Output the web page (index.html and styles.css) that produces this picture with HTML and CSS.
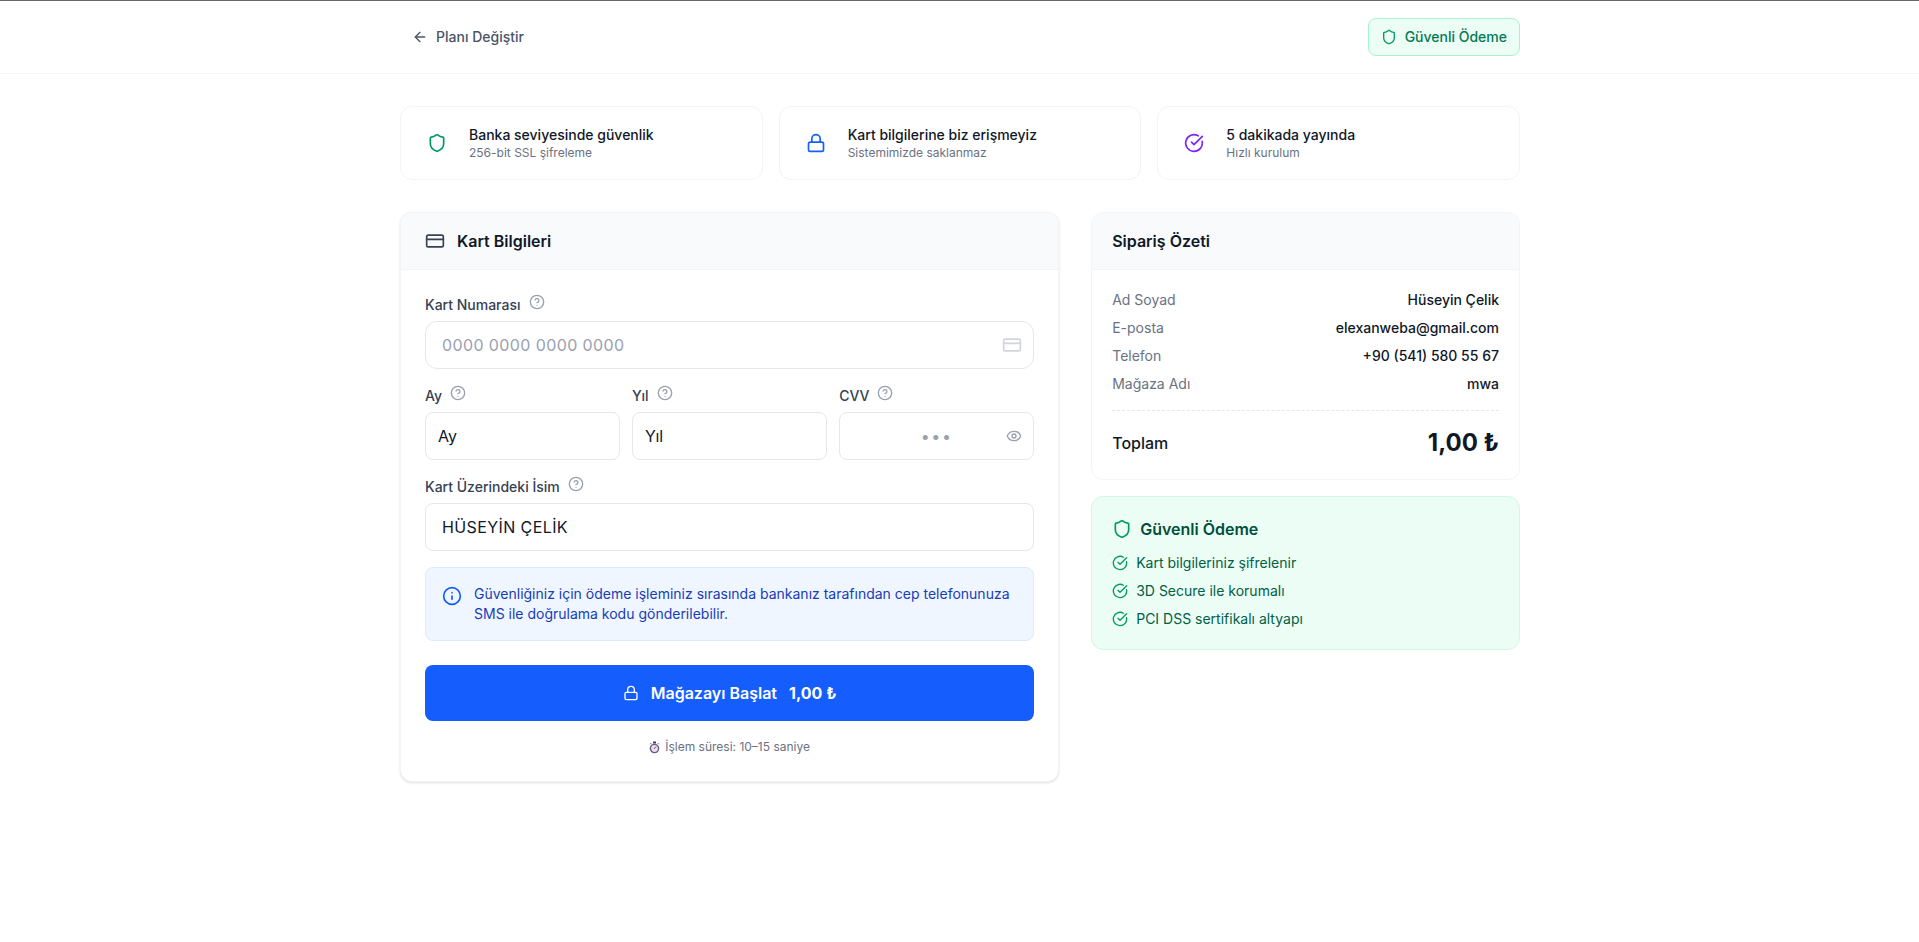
FILE: index.html
```html
<!DOCTYPE html>
<html lang="tr">
  <head>
    <meta charset="utf-8">
    <title>Güvenli Ödeme</title>
    <meta name="viewport" content="width=device-width, initial-scale=1.0">
    <link rel="stylesheet" href="styles.css">
  </head>
  <body>
    <!-- shared icons -->
    <svg class="sprite" aria-hidden="true">
      <symbol id="arrow-left" viewBox="0 0 24 24"><path d="m12 19-7-7 7-7"/><path d="M19 12H5"/></symbol>
      <symbol id="shield" viewBox="0 0 24 24"><path d="M20 13c0 5-3.5 7.5-7.66 8.95a1 1 0 0 1-.67-.01C7.5 20.5 4 18 4 13V6a1 1 0 0 1 1-1c2 0 4.5-1.2 6.24-2.72a1.17 1.17 0 0 1 1.52 0C14.51 3.81 17 5 19 5a1 1 0 0 1 1 1z"/></symbol>
      <symbol id="lock" viewBox="0 0 24 24"><rect width="18" height="11" x="3" y="11" rx="2"/><path d="M7 11V7a5 5 0 0 1 10 0v4"/></symbol>
      <symbol id="check" viewBox="0 0 24 24"><path d="M21.801 10A10 10 0 1 1 17 3.335"/><path d="m9 11 3 3L22 4"/></symbol>
      <symbol id="card" viewBox="0 0 24 24"><rect width="20" height="14" x="2" y="5" rx="2"/><path d="M2 10h20"/></symbol>
      <symbol id="help" viewBox="0 0 24 24"><circle cx="12" cy="12" r="10"/><path d="M9.09 9a3 3 0 0 1 5.83 1c0 2-3 3-3 3"/><path d="M12 17h.01"/></symbol>
      <symbol id="eye" viewBox="0 0 24 24"><path d="M2.062 12.348a1 1 0 0 1 0-.696 10.75 10.75 0 0 1 19.876 0 1 1 0 0 1 0 .696 10.75 10.75 0 0 1-19.876 0"/><circle cx="12" cy="12" r="3"/></symbol>
      <symbol id="info" viewBox="0 0 24 24"><circle cx="12" cy="12" r="10"/><path d="M12 16v-4"/><path d="M12 8h.01"/></symbol>
    </svg>

    <header class="header">
      <div class="container header-inner">
        <button class="back" type="button">
          <svg class="icon icon-sm"><use href="#arrow-left"/></svg>
          Planı Değiştir
        </button>
        <div class="secure-badge">
          <svg class="icon icon-sm"><use href="#shield"/></svg>
          <span>Güvenli Ödeme</span>
        </div>
      </div>
    </header>

    <main class="container main">
      <section class="features">
        <div class="feature">
          <div class="feature-icon green"><svg class="icon"><use href="#shield"/></svg></div>
          <div>
            <p class="feature-title">Banka seviyesinde güvenlik</p>
            <p class="feature-text">256-bit SSL şifreleme</p>
          </div>
        </div>
        <div class="feature">
          <div class="feature-icon blue"><svg class="icon"><use href="#lock"/></svg></div>
          <div>
            <p class="feature-title">Kart bilgilerine biz erişmeyiz</p>
            <p class="feature-text">Sistemimizde saklanmaz</p>
          </div>
        </div>
        <div class="feature">
          <div class="feature-icon violet"><svg class="icon"><use href="#check"/></svg></div>
          <div>
            <p class="feature-title">5 dakikada yayında</p>
            <p class="feature-text">Hızlı kurulum</p>
          </div>
        </div>
      </section>

      <div class="checkout">
        <section class="card payment">
          <div class="card-header">
            <svg class="icon"><use href="#card"/></svg>
            <h2>Kart Bilgileri</h2>
          </div>
          <form class="form">
            <div>
              <div class="label">
                <label for="number">Kart Numarası</label>
                <svg class="icon icon-sm"><use href="#help"/></svg>
              </div>
              <div class="field">
                <input class="input input-number" id="number" type="text" placeholder="0000 0000 0000 0000">
                <svg class="icon field-icon pale"><use href="#card"/></svg>
              </div>
            </div>

            <div class="row">
              <div>
                <div class="label">
                  <label for="month">Ay</label>
                  <svg class="icon icon-sm"><use href="#help"/></svg>
                </div>
                <select class="input select" id="month"><option>Ay</option></select>
              </div>
              <div>
                <div class="label">
                  <label for="year">Yıl</label>
                  <svg class="icon icon-sm"><use href="#help"/></svg>
                </div>
                <select class="input select" id="year"><option>Yıl</option></select>
              </div>
              <div>
                <div class="label">
                  <label for="cvv">CVV</label>
                  <svg class="icon icon-sm"><use href="#help"/></svg>
                </div>
                <div class="field">
                  <input class="input input-cvv" id="cvv" type="text" placeholder="•••">
                  <svg class="icon icon-sm field-icon"><use href="#eye"/></svg>
                </div>
              </div>
            </div>

            <div>
              <div class="label">
                <label for="name">Kart Üzerindeki İsim</label>
                <svg class="icon icon-sm"><use href="#help"/></svg>
              </div>
              <input class="input" id="name" type="text" value="HÜSEYİN ÇELİK">
            </div>

            <div class="notice">
              <svg class="icon"><use href="#info"/></svg>
              <p>Güvenliğiniz için ödeme işleminiz sırasında bankanız tarafından cep telefonunuza SMS ile doğrulama kodu gönderilebilir.</p>
            </div>

            <button class="submit" type="button">
              <svg class="icon icon-sm"><use href="#lock"/></svg>
              <span>Mağazayı Başlat</span>
              <span class="submit-price">1,00 ₺</span>
            </button>

            <p class="duration">
              <svg class="stopwatch" viewBox="0 0 11 13">
                <path d="M4 .5h3v2H4z" fill="#433b6b"/>
                <path d="m1.200 3.200 1-1M9.800 3.200l-1-1" stroke="#433b6b"/>
                <circle cx="5.500" cy="7.500" r="4.100" fill="#e6e0e8" stroke="#635994" stroke-width="1.400"/>
                <path d="m5 8 2.200-2.600" stroke="#d6336c"/>
              </svg>
              İşlem süresi: 10–15 saniye
            </p>
          </form>
        </section>

        <aside class="sidebar">
          <section class="card">
            <div class="card-header summary-header">
              <h2>Sipariş Özeti</h2>
            </div>
            <div class="summary">
              <dl>
                <div><dt>Ad Soyad</dt><dd>Hüseyin Çelik</dd></div>
                <div><dt>E-posta</dt><dd>elexanweba@gmail.com</dd></div>
                <div><dt>Telefon</dt><dd>+90 (541) 580 55 67</dd></div>
                <div><dt>Mağaza Adı</dt><dd>mwa</dd></div>
              </dl>
              <div class="total">
                <span>Toplam</span>
                <strong>1,00 ₺</strong>
              </div>
            </div>
          </section>

          <section class="secure">
            <h3><svg class="icon"><use href="#shield"/></svg>Güvenli Ödeme</h3>
            <ul>
              <li><svg class="icon icon-sm"><use href="#check"/></svg>Kart bilgileriniz şifrelenir</li>
              <li><svg class="icon icon-sm"><use href="#check"/></svg>3D Secure ile korumalı</li>
              <li><svg class="icon icon-sm"><use href="#check"/></svg>PCI DSS sertifikalı altyapı</li>
            </ul>
          </section>
        </aside>
      </div>
    </main>
  </body>
</html>
```
FILE: styles.css
```css
* {
  box-sizing: border-box;
  margin: 0;
  padding: 0;
}

body {
  border-top: 1px solid #666;
  background: #fff;
  color: #101828;
  font-family: Inter, "Liberation Sans", sans-serif;
  font-size: 14px;
  line-height: 20px;
}

button,
input,
select {
  font: inherit;
  color: inherit;
}

h2,
h3 {
  font-size: 16px;
  line-height: 24px;
  font-weight: 600;
}

ul {
  list-style: none;
}

.sprite {
  display: none;
}

.icon {
  flex: none;
  width: 20px;
  height: 20px;
  fill: none;
  stroke: currentColor;
  stroke-width: 2;
  stroke-linecap: round;
  stroke-linejoin: round;
}

.icon-sm {
  width: 16px;
  height: 16px;
}

.container {
  max-width: 1152px;
  margin: 0 auto;
  padding: 0 15.5px 0 16.5px;
}

/* header */
.header {
  background: #fff;
  border-bottom: 1px solid #f3f4f6;
}

.header-inner {
  display: flex;
  align-items: center;
  justify-content: space-between;
  height: 72px;
}

.back {
  display: flex;
  align-items: center;
  gap: 8px;
  padding: 8px 12px;
  border: 0;
  background: none;
  color: #4a5565;
  font-weight: 500;
  cursor: pointer;
}

.secure-badge {
  display: flex;
  align-items: center;
  gap: 8px;
  padding: 8px 12px;
  border: 1px solid #a4f4cf;
  border-radius: 8px;
  background: #ecfdf5;
  color: #007a55;
  font-weight: 500;
}

.secure-badge .icon {
  color: #009966;
}

.main {
  padding-top: 32px;
  padding-bottom: 32px;
}

/* feature cards */
.features {
  display: grid;
  grid-template-columns: repeat(3, 1fr);
  gap: 16px;
  margin-bottom: 32px;
}

.feature {
  display: flex;
  align-items: center;
  gap: 12px;
  padding: 16px;
  border: 1px solid #f3f4f6;
  border-radius: 12px;
  background: #fff;
}

.feature-icon {
  display: flex;
  align-items: center;
  justify-content: center;
  width: 40px;
  height: 40px;
}

.green {
  color: #009966;
}
.blue {
  color: #155dfc;
}
.violet {
  color: #7f22fe;
}

.feature-title {
  font-weight: 500;
}

.feature-text {
  color: #6a7282;
  font-size: 12px;
  line-height: 16px;
}

/* checkout */
.checkout {
  display: grid;
  grid-template-columns: repeat(5, 1fr);
  align-items: start;
  gap: 32px;
}

.card {
  overflow: hidden;
  border: 1px solid #f3f4f6;
  border-radius: 12px;
  background: #fff;
}

.payment {
  grid-column: span 3;
  box-shadow: 0 1px 3px rgba(0, 0, 0, 0.1), 0 1px 2px -1px rgba(0, 0, 0, 0.1);
}

.sidebar {
  grid-column: span 2;
  display: grid;
  gap: 16px;
}

.card-header {
  display: flex;
  align-items: center;
  gap: 12px;
  padding: 16px 24px;
  border-bottom: 1px solid #f3f4f6;
  background: #f9fafb;
}

.card-header .icon {
  color: #364153;
}

.summary-header {
  padding: 16px 20px;
}

.form {
  display: grid;
  gap: 16px;
  padding: 24px;
}

.label {
  display: flex;
  align-items: flex-start;
  gap: 8px;
  height: 27px;
  color: #364153;
  font-weight: 500;
}

.label label {
  padding-top: 1px;
}

.label .icon {
  color: #99a1af;
}

.row {
  display: grid;
  grid-template-columns: repeat(3, 1fr);
  gap: 12px;
}

.field {
  position: relative;
}

.input {
  display: block;
  width: 100%;
  height: 48px;
  padding: 0 16px;
  border: 1px solid #e5e7eb;
  border-radius: 8px;
  outline: none;
  background: #fff;
  font-size: 16px;
  letter-spacing: 0.4px;
}

.input::placeholder {
  color: #99a1af;
}

.input-number {
  border-radius: 12px;
}

.input-cvv {
  text-align: center;
  letter-spacing: 1.6px;
}

.select {
  appearance: none;
  padding: 0 12px;
  letter-spacing: 0;
}

.field-icon {
  position: absolute;
  top: 50%;
  right: 12px;
  transform: translateY(-50%);
  color: #99a1af;
}

.pale {
  color: #d1d5dc;
}

.notice {
  display: flex;
  gap: 12px;
  padding: 16px;
  border: 1px solid #dbeafe;
  border-radius: 8px;
  background: #eff6ff;
  color: #193cb8;
}

.notice .icon {
  margin-top: 2px;
  color: #155dfc;
}

.submit {
  display: flex;
  align-items: center;
  justify-content: center;
  gap: 12px;
  height: 56px;
  margin-top: 8px;
  border: 0;
  border-radius: 8px;
  background: #155dfc;
  color: #fff;
  font-size: 16px;
  font-weight: 600;
  cursor: pointer;
}

.submit-price {
  font-weight: 700;
}

.duration {
  display: flex;
  align-items: center;
  justify-content: center;
  gap: 5px;
  color: #6a7282;
  font-size: 12px;
}

.stopwatch {
  width: 11px;
  height: 13px;
  fill: none;
}

/* order summary */
.summary {
  padding: 20px;
}

.summary dl {
  display: grid;
  gap: 8px;
}

.summary dl div {
  display: flex;
  justify-content: space-between;
}

.summary dt {
  color: #6a7282;
}

.summary dd {
  font-weight: 500;
}

.total {
  display: flex;
  align-items: center;
  justify-content: space-between;
  margin-top: 16px;
  padding-top: 16px;
  border-top: 1px dashed #e5e7eb;
  font-size: 16px;
  font-weight: 500;
}

.total strong {
  font-size: 24px;
  line-height: 32px;
  font-weight: 700;
}

.secure {
  padding: 20px;
  border: 1px solid #d0fae5;
  border-radius: 12px;
  background: #ecfdf5;
  color: #006045;
}

.secure h3 {
  display: flex;
  align-items: center;
  gap: 8px;
  margin-bottom: 12px;
  color: #004f3b;
}

.secure ul {
  display: grid;
  gap: 8px;
}

.secure li {
  display: flex;
  align-items: center;
  gap: 8px;
}

.secure .icon {
  color: #009966;
}
```
